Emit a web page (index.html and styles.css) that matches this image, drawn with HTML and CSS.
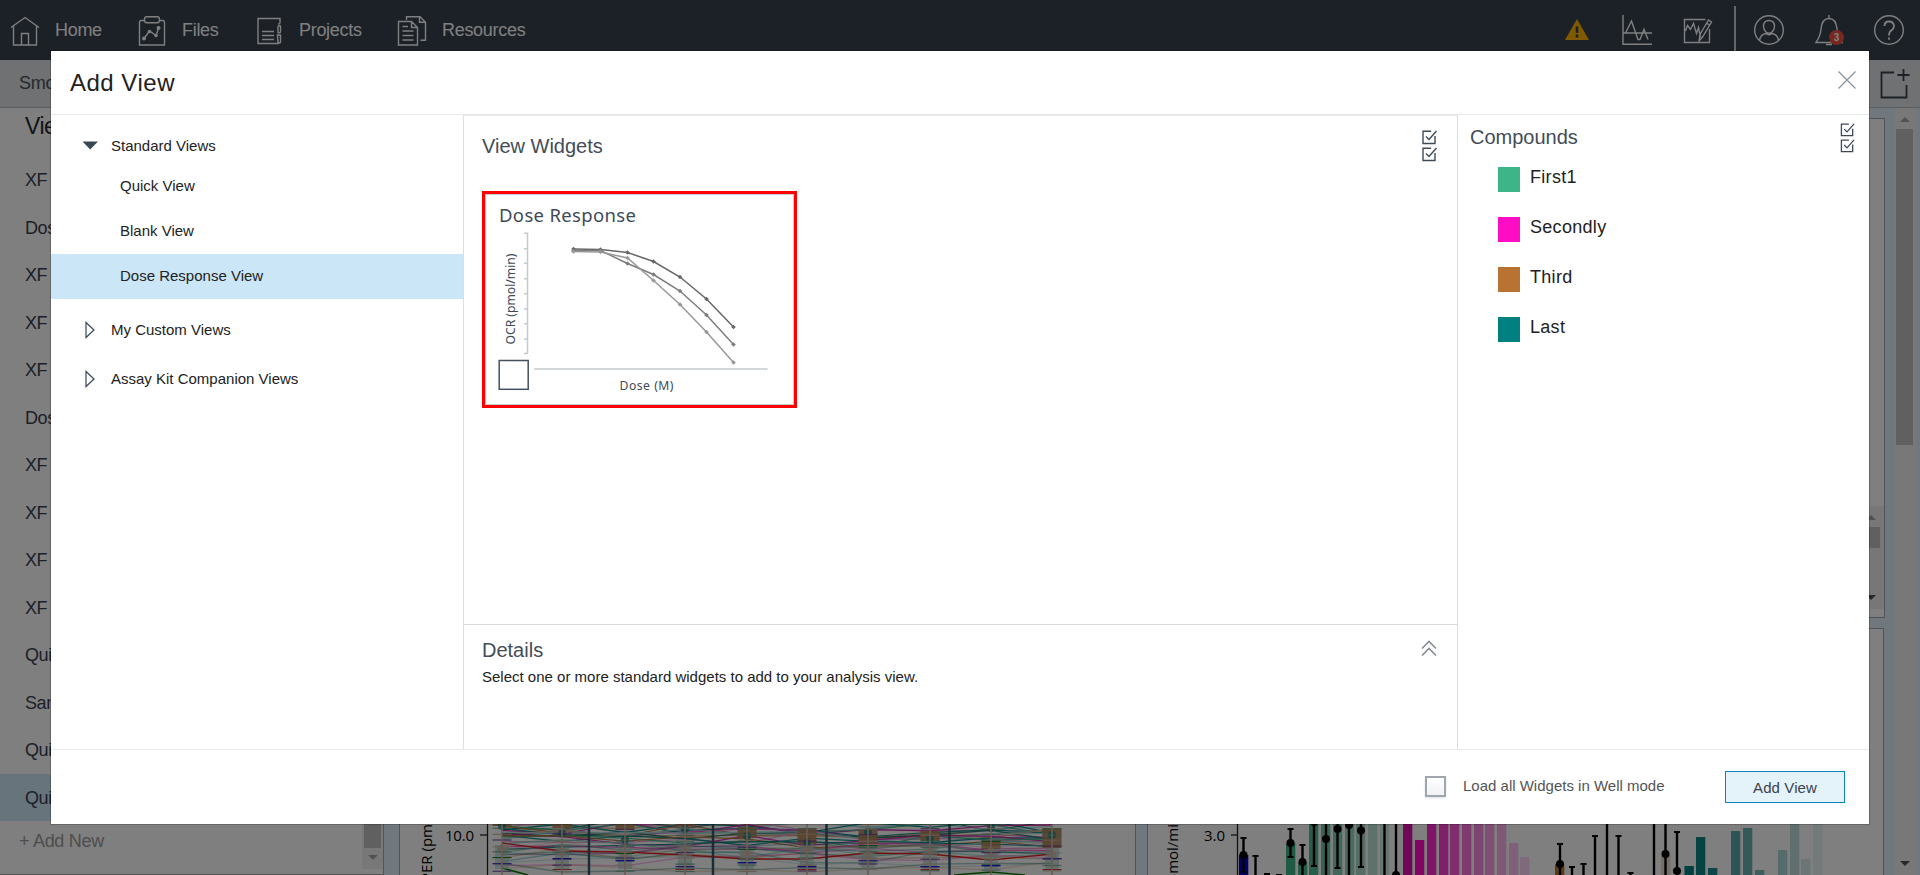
FILE: index.html
```html
<!DOCTYPE html>
<html lang="en">
<head>
<meta charset="utf-8">
<title>Add View</title>
<link rel="stylesheet" href="styles.css">
</head>
<body>
<div class="app">
  <header class="topbar">
    <nav class="nav">
      <a class="nav-item home"><svg class="icon" viewBox="0 0 30 30"><path d="M1 11.500L15 1.500l14 10M3.500 10v19h23V10M11.500 29V17.500h7V29"/></svg>Home</a>
      <a class="nav-item files"><svg class="icon" viewBox="0 0 30 30"><path d="M7.500 4.500h-3q-2 0-2 2v22.500h25V6.500q0-2-2-2h-3M9.500.8h11q2 0 2 3t-2 3h-11q-2 0-2-3t2-3zM7 22.500l5.500-7.500 6.500 4.500 2.500-7"/><g class="solid"><circle cx="7" cy="22.500" r="2"/><circle cx="12.500" cy="15.500" r="1.800"/><circle cx="19" cy="19.500" r="1.800"/><circle cx="21.500" cy="12" r="2"/></g></svg>Files</a>
      <a class="nav-item projects"><svg class="icon" viewBox="0 0 30 30"><path d="M24 8.500l2-1.500V2.500h-22v25h20V24M8 15.500h12M8 19.500h12M8 23.500h12M24 10.500q2.500-2 2.500 0v5q0 2-2.500 1zM23.500 19h3v7.500l-2.500 1z"/></svg>Projects</a>
      <a class="nav-item resources"><svg class="icon" viewBox="0 0 30 30"><path d="M1.500 5.500h13l6 6V29h-19zM14.500 5.500v6h6M5.500 10.500h5.500M5.500 15h11M5.500 19.500h11M5.500 24h11M9.500 4V.8h13.500l5.500 5.500v18h-5M22.500.8v5.500h6"/></svg>Resources</a>
    </nav>
    <div class="tools">
      <svg class="icon" viewBox="0 0 30 30"><path class="warn" d="M15 4l12 21H3z"/><path class="mark" d="M15 11.500v6.500M15 19.500v3"/></svg>
      <svg class="icon" viewBox="0 0 30 30"><path d="M1 0v29.300h29M1 18h29M1 18h2.500L9.500 6l6.500 18.500h2l4-10 4 10"/></svg>
      <svg class="icon" viewBox="0 0 30 30"><path d="M23.500 4.500h-21v23h25V14M3.500 16l2-5.500 3 4 3-6 3 10 2-6 2 10M17 26l1-6.500L26.500 5l3 2-9 15zM24.500 8l3 2"/></svg>
      <span class="tool-divider"></span>
      <svg class="icon" viewBox="0 0 30 30"><circle cx="15" cy="15" r="14.300"/><path d="M15 5.500q5.500 0 5.500 6 0 3-2.500 5.500-3 2.500-6 0-2.500-2.500-2.500-5.500 0-6 5.500-6zM5.500 25q1.500-6 6.500-6.500 3 2.500 6 0 5 .5 6.500 6.500"/></svg>
      <span class="bell"><svg class="icon" viewBox="0 0 30 30"><path d="M15 0v3M2 27.500h26L25.500 22Q23.500 20 23 14 22 3.500 15 3.500T7 14Q6.500 21 2 27.500zM12 29.500h6"/></svg><span class="badge">3</span></span>
      <svg class="icon" viewBox="0 0 30 30"><circle cx="15" cy="15" r="14.300"/><path class="heavy" d="M10.500 11q0-4.500 4.500-4.500t5 4.500q0 2.500-2.500 4.200T15 20.500M15 22.500v2.200"/></svg>
    </div>
  </header>
  <div class="crumbs"><span>Smoke</span><svg class="newtab" viewBox="0 0 30 30"><path d="M14 3.500H1.500v25h25V16M23.500 0v12M17.500 6h12"/></svg></div>
  <div class="workspace">
    <aside class="views">
      <h2>Views</h2>
      <ul>
        <li>XF Kinetic</li><li>Dose View</li><li>XF Rate</li><li>XF Data</li><li>XF Stress</li><li>Dose View</li><li>XF Mito</li>
        <li>XF Rate</li><li>XF Data</li><li>XF Plate</li><li>Quick View</li><li>Sample View</li><li>Quick View</li><li class="current">Quick View</li>
      </ul>
      <p class="add-new">+ Add New</p>
      <div class="views-scroll"><i class="thumb"></i><i class="arrow-down"></i></div>
    </aside>
    <main class="board">
      <section class="panel wide"><div class="inner-scroll"><i class="arrow-up"></i><i class="thumb"></i><i class="arrow-down dark"></i></div></section>
      <div class="row">
        <section class="panel"><svg id="rates" class="plot" viewBox="401 629 735 246"></svg></section>
        <section class="panel"><svg id="bars" class="plot" viewBox="1149 629 735 246"></svg></section>
      </div>
    </main>
    <div class="page-scroll"><i class="arrow-up"></i><i class="thumb"></i><i class="arrow-down dark"></i></div>
  </div>
</div>
<div class="backdrop">
  <div class="modal">
    <div class="modal-head"><h1>Add View</h1><svg class="close" viewBox="0 0 18 18"><path d="M.5.5l17 17M17.500.5l-17 17"/></svg></div>
    <div class="modal-body">
      <div class="tree">
        <div class="group first"><svg viewBox="0 0 16 18"><path class="filled" d="M.5 5.500H16L8.200 13.500z"/></svg>Standard Views</div>
        <div class="leaf">Quick View</div>
        <div class="leaf">Blank View</div>
        <div class="leaf selected">Dose Response View</div>
        <div class="group custom"><svg viewBox="0 0 16 18"><path d="M4 1.500v15l8-7.500z"/></svg>My Custom Views</div>
        <div class="group"><svg viewBox="0 0 16 18"><path d="M4 1.500v15l8-7.500z"/></svg>Assay Kit Companion Views</div>
      </div>
      <div class="middle">
        <section class="widgets">
          <div class="section-head"><h2>View Widgets</h2>
            <svg class="checks" viewBox="0 0 15 32"><path d="M9 1.200H1v12.300h12V6M4 6.500l3 3 7.500-8.500M9 18.200H1v12.300h12V23M4 23.500l3 3 7.500-8.500"/></svg></div>
          <div class="card">
            <svg viewBox="485 194 309 211">
              <text class="card-title" x="499" y="222" textLength="137">Dose Response</text>
              <text class="axis-label" transform="translate(514.500 344.500) rotate(-90)" textLength="91">OCR (pmol/min)</text>
              <text class="axis-label" x="619.500" y="390" textLength="54">Dose (M)</text>
              <path class="axis" d="M524 233.200h3.500v120.300H524M524 248.700h3.500M524 263.300h3.500M524 278.700h3.500M524 293.700h3.500M524 309h3.500M524 323.700h3.500M524 339h3.500M534 369h233.500"/>
              <g class="curve dark"><polyline points="573.500,249 600.500,249.500 627.500,252.500 653.500,261.500 680,277 706.500,299 733.500,327"/></g>
              <g class="curve mid"><polyline points="573.500,250.500 600.500,250.500 627.500,263.500 653.500,274.500 680,291 706.500,315 733.500,344.500"/></g>
              <g class="curve light"><polyline points="573.500,251.500 600.500,252 627.500,258 653.500,280.500 680,304.500 706.500,332 733.500,362.500"/></g>
              <rect class="tick-box" x="499.200" y="360.500" width="29" height="28.800"/>
              <rect class="card-edge" x="485.500" y="194.500" width="308" height="210"/>
            </svg>
          </div>
        </section>
        <section class="details">
          <div class="section-head"><h2>Details</h2><svg class="chevrons" viewBox="0 0 16 16"><path d="M1 8.500L8 1.500l7 7M1 15.500l7-7 7 7"/></svg></div>
          <p>Select one or more standard widgets to add to your analysis view.</p>
        </section>
      </div>
      <section class="compounds">
        <div class="section-head"><h2>Compounds</h2>
          <svg class="checks" viewBox="0 0 15 32"><path d="M9 1.200H1v12.300h12V6M4 6.500l3 3 7.500-8.500M9 18.200H1v12.300h12V23M4 23.500l3 3 7.500-8.500"/></svg></div>
        <ul>
          <li><i class="swatch green"></i>First1</li>
          <li><i class="swatch pink"></i>Secondly</li>
          <li><i class="swatch brown"></i>Third</li>
          <li><i class="swatch teal"></i>Last</li>
        </ul>
      </section>
    </div>
    <div class="modal-foot"><span class="checkbox"></span><label>Load all Widgets in Well mode</label><button>Add View</button></div>
  </div>
</div>
<script src="charts.js"></script>
</body>
</html>
```
FILE: styles.css
```css
* { box-sizing: border-box; }
body { margin: 0; width: 1920px; height: 875px; overflow: hidden; position: relative; font-family: "Liberation Sans", Arial, sans-serif; color: #222b35; }
h1, h2, p, ul { margin: 0; padding: 0; font-weight: normal; }
ul { list-style: none; }
svg { display: block; flex: none; }

.app { width: 1920px; height: 875px; display: flex; flex-direction: column; background: #fff; }
.topbar { height: 60px; flex: none; display: flex; justify-content: space-between; background: #394250; color: #fff; }
.nav { display: flex; padding-left: 10px; }
.nav-item { display: flex; align-items: center; gap: 15px; padding-top: 1px; font-size: 18px; letter-spacing: -.3px; }
.home { width: 127px; }
.files { width: 117px; }
.projects { width: 143px; }
.icon { width: 30px; height: 30px; fill: none; stroke: #fff; stroke-width: 1.4; overflow: visible; }
.icon .solid { fill: #fff; stroke: none; }
.icon .warn { fill: #ffb400; stroke: none; }
.icon .mark { stroke: #394250; stroke-width: 2.6; }
.icon .heavy { stroke-width: 1.8; }
.tools { display: flex; align-items: center; gap: 30px; padding-right: 16px; }
.tool-divider { width: 2px; height: 54px; margin: 0 -12px 0 -8px; align-self: flex-end; background: #ccc; }
.bell { position: relative; }
.badge { position: absolute; left: 15px; top: 15px; width: 15px; height: 15px; border-radius: 50%; background: #f0503a; font-size: 10px; font-weight: bold; line-height: 15px; text-align: center; }
.crumbs { height: 48px; flex: none; display: flex; align-items: center; justify-content: space-between; padding: 0 10px 0 19px; background: #dfe2e6; border-bottom: 1px solid #b4b8bc; font-size: 18px; letter-spacing: -.3px; color: #4b5058; }
.newtab { width: 30px; height: 30px; fill: none; stroke: #394250; stroke-width: 1.8; }

.workspace { flex: 1; min-height: 0; display: flex; background: #e1eefa; }
.views { position: relative; width: 384px; background: #fff; border-right: 1px solid #aaa; border-bottom: 1px solid #aaa; overflow: hidden; }
.views h2 { height: 48px; padding-left: 25px; line-height: 37px; font-size: 23px; letter-spacing: -.5px; }
.views li { height: 47.500px; padding-left: 25px; line-height: 48px; font-size: 18px; letter-spacing: -.4px; color: #394250; }
.views .current { background: #cee8f6; }
.add-new { padding-left: 19px; line-height: 41px; font-size: 18px; letter-spacing: -.3px; color: #9b9b9b; }
.views-scroll { position: absolute; right: 0; top: 0; bottom: 5px; width: 21px; display: flex; flex-direction: column; align-items: center; background: #f1f1f1; }
.views-scroll .thumb { width: 17px; height: 300px; margin: auto 0 7px; background: #c1c1c1; }
.arrow-up, .arrow-down { width: 0; height: 0; flex: none; border: 5px solid transparent; }
.arrow-up { border-bottom-color: #a3a3a3; border-top: 0; }
.arrow-down { border-top-color: #a3a3a3; border-bottom: 0; }
.arrow-down.dark { border-top-color: #505050; }
.views-scroll .arrow-down { margin-bottom: 9px; }
.board { width: 1501px; display: flex; flex-direction: column; gap: 10px; padding: 10px 0 0 15px; }
.panel { border: 1px solid #a0a8b0; background: #fff; }
.wide { height: 500px; position: relative; }
.inner-scroll { position: absolute; right: 0; top: 387px; width: 24px; height: 103px; display: flex; flex-direction: column; align-items: center; background: #eee; padding: 9px 2px 9px 0; }
.inner-scroll .thumb { width: 17px; height: 21px; margin: 7px 0 auto; background: #c1c1c1; }
.row { flex: 1; display: grid; grid-template-columns: 737px 737px; gap: 11px; }
.row .panel { border-bottom: 0; overflow: hidden; }
.plot { width: 735px; height: 246px; }
.plot text { font-family: "Open Sans", "Noto Sans", sans-serif; font-size: 15px; }
.page-scroll { width: 21px; margin-left: 10px; display: flex; flex-direction: column; align-items: center; background: #f1f1f1; padding: 9px 2px 9px 0; }
.page-scroll .thumb { width: 17px; height: 316px; margin: 7px 0 auto; background: #c1c1c1; }

.backdrop { position: absolute; inset: 0; padding: 51px; background: rgba(0, 0, 0, .5); }
.modal { width: 1818px; height: 773px; display: flex; flex-direction: column; background: #fff; box-shadow: 0 0 0 1px rgba(0, 0, 0, .2); }
.modal-head { height: 64px; flex: none; display: flex; align-items: flex-start; justify-content: space-between; padding: 18px 13px 0 19px; border-bottom: 1px solid #e8e9eb; }
.modal-head h1 { font-size: 24px; line-height: 28px; letter-spacing: .5px; color: #222; }
.close { width: 18px; height: 18px; margin-top: 2px; fill: none; stroke: #8b929b; stroke-width: 1.2; }
.modal-body { flex: 1; display: flex; }
.tree { width: 413px; border-right: 1px solid #dcdee0; font-size: 15px; color: #222; }
.group { display: flex; align-items: center; gap: 13px; height: 49px; padding-left: 31px; }
.group svg { width: 16px; height: 18px; fill: none; stroke: #394654; stroke-width: 1.2; }
.group .filled { fill: #394654; stroke: none; }
.group.first { height: 36px; margin: 12px 0 1px; }
.leaf { height: 45px; padding-left: 69px; line-height: 44px; }
.selected { background: #cbe6f7; }
.group.custom { margin-top: 6px; }
.middle { width: 994px; border-right: 1px solid #dcdee0; display: flex; flex-direction: column; }
.section-head { display: flex; justify-content: space-between; }
.section-head h2 { font-size: 20px; line-height: 24px; color: #434c58; }
.widgets { height: 509px; padding: 18px 20px 0 18px; border-top: 1px solid #e6eaee; }
.widgets .section-head { height: 57px; }
.checks { width: 15px; height: 32px; fill: none; stroke: #3f4a57; stroke-width: 1.4; }
.widgets .checks { margin-top: -4px; }
.card { width: 315px; height: 217px; border: 3px solid #f00; background: #fff; }
.card svg { width: 309px; height: 211px; }
.card text { font-family: "Noto Sans", "Open Sans", sans-serif; fill: #3e4a58; }
.card-title { font-size: 18.500px; }
.card-edge { fill: none; stroke: #c6cdcf; }
.axis-label { font-size: 12.200px; }
.axis { fill: none; stroke: #c3cbcd; stroke-width: 1.5; }
.curve polyline { fill: none; stroke-width: 1.5; }
.curve.dark { stroke: #666; fill: #666; }
.curve.mid { stroke: #7d7d7d; fill: #7d7d7d; }
.curve.light { stroke: #989898; fill: #989898; }
.tick-box { fill: #fff; stroke: #44505e; stroke-width: 1.5; }
.details { flex: 1; padding: 13px 20px 0 18px; border-top: 1px solid #d8dadc; }
.chevrons { width: 16px; height: 16px; margin-top: 2px; fill: none; stroke: #858d97; stroke-width: 1.6; }
.details p { margin-top: 6px; font-size: 15px; line-height: 18px; color: #222; }
.compounds { flex: 1; padding: 8px 14px 0 12px; }
.compounds .section-head { height: 44px; }
.compounds h2 { line-height: 28px; }
.compounds .checks { height: 30px; }
.compounds li { height: 50px; display: flex; gap: 10px; padding-left: 28px; font-size: 18px; line-height: 20px; letter-spacing: .3px; color: #222; }
.swatch { width: 22px; height: 25px; }
.green { background: #3eb489; }
.pink { background: #ff0dc5; }
.brown { background: #b87333; }
.teal { background: #008080; }
.modal-foot { height: 75px; flex: none; display: flex; justify-content: flex-end; padding: 21px 24px 0 0; border-top: 1px solid #e8e9eb; font-size: 15px; }
.checkbox { width: 21px; height: 21px; margin-top: 5px; border: 2px solid #a0a6b0; background: linear-gradient(#fff, #f2f2f4); box-shadow: 0 1px 2px rgba(0, 0, 0, .12); }
.modal-foot label { width: 262px; padding-left: 17px; line-height: 30px; color: #555; }
.modal-foot button { width: 120px; height: 32px; margin: 0 0 0 17px; padding: 0; border: 1px solid #0a82c3; background: #e4f2fa; font: 15px "Liberation Sans", Arial, sans-serif; letter-spacing: .1px; color: #3c424a; }
```
FILE: charts.js
```javascript
const rect = (x, y, w, h, fill, opacity = 1) =>
  `<rect x="${x}" y="${y}" width="${w}" height="${h}" fill="${fill}" opacity="${opacity}"/>`;
const line = (x1, y1, x2, y2, stroke, w = 1, opacity = 1) =>
  `<line x1="${x1}" y1="${y1}" x2="${x2}" y2="${y2}" stroke="${stroke}" stroke-width="${w}" opacity="${opacity}"/>`;

// Markers on the dose response curves
document.querySelectorAll('.curve polyline').forEach(p => {
  const dots = p.getAttribute('points').split(' ').map(pt => {
    const [x, y] = pt.split(',').map(Number);
    return `<path stroke="none" d="M${x} ${y - 2.3}l2.300 2.300-2.300 2.300-2.300-2.300z"/>`;
  });
  p.parentNode.insertAdjacentHTML('beforeend', dots.join(''));
});

// Rate traces, one value per measurement
const xs = [503, 563, 626, 686, 748, 808, 869, 931, 992, 1053];
const palette = ['#008080', '#d020a8', '#3eb489', '#b87333', '#008080', '#ff50d0', '#90c8c0', '#d8a880', '#207060', '#e8a0d8', '#a8d8d8'];
let seed = 7;
const rnd = () => (seed = (seed * 16807) % 2147483647) / 2147483647;
let out = '';
for (let k = 0; k < 42; k++) {
  const base = 816 + k * 1.05 + (k > 36 ? (k - 36) * 2 : 0);
  const pts = xs.map(x => `${x},${(base + (rnd() - .5) * 13).toFixed(1)}`).join(' ');
  out += `<polyline points="${pts}" fill="none" stroke="${palette[k % palette.length]}" stroke-width="1.300" opacity="${k > 28 ? .4 : .9}"/>`;
}
out += '<polyline points="503,843 563,851 626,852 686,855 748,859 808,859 869,853 931,854 992,860 1053,854" fill="none" stroke="#e02020" stroke-width="1.300"/>';
out += '<path d="M503 868l26 7M955 875l37-3 34 3" stroke="#008000" fill="none" stroke-width="1.500"/>';
[590, 714, 827.5, 950.5].forEach(x => out += line(x, 824, x, 875, '#385868', 2.5));
const blue = [863, 858, 860, 866, 862, 866, 860, 866, 865, 858];
// Boxes of overlapping error-bar caps: [top, height]
const caps = [[824, 2], [824, 4], [824, 5], [824, 2], [827, 11], [828, 16], [830, 14], [831, 10], [840, 9], [828, 20]];
xs.forEach((x, i) => {
  out += rect(x - 7, 845, 14, 24, '#a8c8c0', .6);
  out += rect(x - 9.5, caps[i][0], 19, caps[i][1], '#b08458', .9);
  out += `<circle cx="${x}" cy="${826 + (i * 7) % 18}" r="4" fill="#208080" opacity=".8"/><circle cx="${x}" cy="${849 + (i * 3) % 7}" r="4.500" fill="#d0bcae" opacity=".8"/>`;
  for (let j = 0; j < 8; j++) {
    out += rect(x - 9.5, 827 + j * 6 + rnd() * 2, 19, 1.2, ['#70a890', '#c8b090', '#7040a0', '#d8c0b0', '#60a088'][(i + j) % 5], .85);
  }
  out += rect(x - 9.5, blue[i], 19, 1.4, i % 3 ? '#2020e0' : '#5040c0');
  out += rect(x - 9.5, i % 2 ? 869 : 857 - i * 2, 19, 1, i % 2 ? '#d04040' : '#208030');
  out += line(x, 824, x, 875, '#d0b8a8', 1.6);
});
out += line(488.5, 824, 488.5, 875, '#222', 1.3) + line(481, 835, 488, 835, '#222', 1.3);
out += '<text x="446" y="840.500" textLength="29">10.0</text>';
out += '<text transform="translate(433 882) rotate(-90)">PER (pmol/min)</text>';
document.getElementById('rates').innerHTML = out;

// Bars: [left, top, colour, opacity]
const bars = [[1240, 855, '#0000d8', 1],
  [1287, 843, '#3eb489', 1], [1299, 862, '#3eb489', .95], [1310, 824, '#3eb489', .9], [1322, 824, '#3eb489', .75],
  [1334, 824, '#3eb489', .65], [1346, 824, '#3eb489', .55], [1357, 824, '#3eb489', .45], [1369, 824, '#3eb489', .35], [1381, 824, '#3eb489', .25],
  [1404, 824, '#e010b0', 1], [1416, 840, '#ff0dc5', 1], [1428, 824, '#ff0dc5', .88], [1440, 824, '#ff0dc5', .78], [1451, 824, '#ff0dc5', .68],
  [1463, 824, '#ff0dc5', .58], [1475, 824, '#ff0dc5', .48], [1486, 824, '#ff0dc5', .4], [1498, 824, '#ff0dc5', .32], [1510, 843, '#ff0dc5', .26], [1521, 857, '#ff0dc5', .18],
  [1556, 864, '#b87333', 1], [1662, 855, '#e8dccc', 1],
  [1685.5, 866, '#008080', 1], [1697, 837, '#008080', .95], [1709, 868, '#008080', .9], [1732, 831, '#008080', .65], [1744, 828, '#008080', .6],
  [1756, 870, '#008080', .5], [1779, 850, '#008080', .32], [1791, 824, '#008080', .25], [1802, 859, '#008080', .16], [1814, 824, '#008080', .09]];
// Error bars: [x, top, bottom, dot]
const errs = [[1244.5, 838, 872, 855], [1256.5, 856, 880], [1268, 874, 880], [1280, 875, 880],
  [1291.5, 829, 857, 843], [1303.5, 845, 880, 862], [1315, 820, 866, 822], [1327, 820, 880, 839], [1338.5, 820, 868, 829],
  [1350, 820, 880, 825], [1362, 820, 867, 830.5], [1385.5, 820, 880], [1397, 820, 880, 875],
  [1561, 844, 880, 864], [1573, 867, 880], [1584.5, 864, 880], [1596, 836, 880], [1608, 820, 880], [1619.5, 836, 880], [1631.5, 873, 880],
  [1655, 820, 880], [1666.5, 820, 880, 854], [1678, 832, 880, 871]];
let b = '';
bars.forEach(([x, y, c, o]) => b += rect(x, y, 9.3, 60, c, o));
errs.forEach(([x, t, e, dot]) => {
  b += line(x, t, x, e, '#000', 2.4) + line(x - 3, t, x + 3, t, '#000', 2) + line(x - 3, e, x + 3, e, '#000', 2);
  if (dot) b += `<circle cx="${x}" cy="${dot}" r="4"/>`;
});
b += line(1238.5, 824, 1238.5, 875, '#222', 1.3) + line(1232, 835, 1238, 835, '#222', 1.3);
b += '<text x="1205" y="840.500" textLength="21">3.0</text>';
b += '<text transform="translate(1179 883) rotate(-90)">pmol/min)</text>';
document.getElementById('bars').innerHTML = b;
```
